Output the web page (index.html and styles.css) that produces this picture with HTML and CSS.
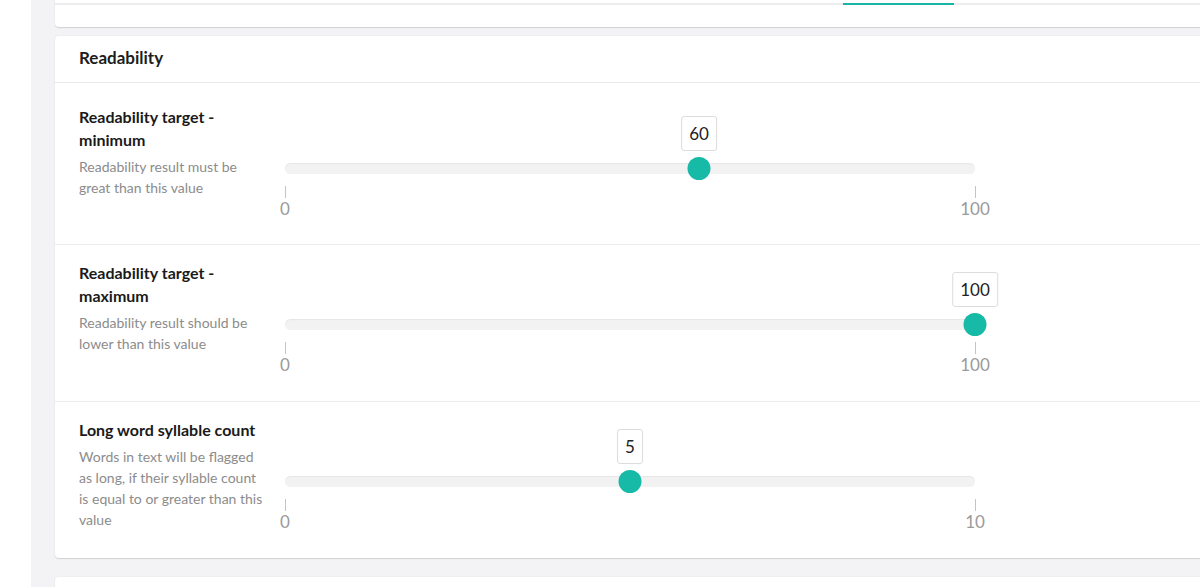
FILE: index.html
```html
<!DOCTYPE html>
<html>
<head>
<meta charset="utf-8">
<link rel="stylesheet" href="styles.css">
</head>
<body>
<div class="app">
  <div class="gutter"></div>
  <div class="main">
    <div class="card card-top">
      <div class="tabbar"><div class="tab-active"></div></div>
    </div>
    <div class="card card-settings">
      <div class="card-header">Readability</div>

      <div class="row row-first">
        <div class="label-col">
          <div class="title">Readability target - minimum</div>
          <div class="desc">Readability result must be great than this value</div>
        </div>
        <div class="slider">
          <div class="bubble" style="left:60%">60</div>
          <div class="track"></div>
          <div class="thumb" style="left:60%"></div>
          <div class="scale">
            <div class="mark"><span class="tick"></span><span class="num">0</span></div>
            <div class="mark"><span class="tick"></span><span class="num">100</span></div>
          </div>
        </div>
      </div>

      <div class="row">
        <div class="label-col">
          <div class="title">Readability target - maximum</div>
          <div class="desc">Readability result should be lower than this value</div>
        </div>
        <div class="slider">
          <div class="bubble" style="left:100%">100</div>
          <div class="track"></div>
          <div class="thumb" style="left:100%"></div>
          <div class="scale">
            <div class="mark"><span class="tick"></span><span class="num">0</span></div>
            <div class="mark"><span class="tick"></span><span class="num">100</span></div>
          </div>
        </div>
      </div>

      <div class="row row-last">
        <div class="label-col">
          <div class="title">Long word syllable count</div>
          <div class="desc">Words in text will be flagged as long, if their syllable count is equal to or greater than this value</div>
        </div>
        <div class="slider">
          <div class="bubble" style="left:50%">5</div>
          <div class="track"></div>
          <div class="thumb" style="left:50%"></div>
          <div class="scale">
            <div class="mark"><span class="tick"></span><span class="num">0</span></div>
            <div class="mark"><span class="tick"></span><span class="num">10</span></div>
          </div>
        </div>
      </div>
    </div>
    <div class="card card-next"></div>
  </div>
</div>
</body>
</html>
```

FILE: styles.css
```css
* { box-sizing: border-box; }
html, body {
  margin: 0;
  padding: 0;
  height: 100%;
  overflow: hidden;
  background: #ffffff;
}
body {
  font-family: Lato, "Open Sans", Arial, sans-serif;
  color: #1d1d1d;
}
.app {
  display: flex;
  height: 587px;
}
.gutter {
  width: 31px;
  flex: 0 0 31px;
  background: #ffffff;
}
.main {
  flex: 1;
  min-width: 0;
  background: #f3f3f5;
  padding-left: 24px;
  overflow: hidden;
  display: flex;
  flex-direction: column;
}
.card {
  width: 1200px;
  background: #ffffff;
  border-radius: 4px;
  box-shadow: 0 1px 1px rgba(0,0,0,0.12), 0 0 0 1px rgba(0,0,0,0.02);
  flex: none;
}
.card-top {
  height: 27px;
  border-radius: 0 0 4px 4px;
}
.tabbar {
  display: flex;
  height: 2px;
  margin-top: 3px;
  background: #ececef;
}
.tab-active {
  margin-left: 788px;
  width: 111px;
  height: 2px;
  background: #17b5a5;
}
.card-settings {
  margin-top: 9px;
}
.card-header {
  height: 47px;
  padding: 0 24px 4px;
  display: flex;
  align-items: center;
  font-size: 17px;
  font-weight: 700;
  border-bottom: 1px solid #e9e9ec;
}
.row {
  display: flex;
  align-items: flex-start;
  padding: 16px 24px 25px;
  border-bottom: 1px solid #ececee;
}
.row-first {
  padding-top: 22px;
  padding-bottom: 24px;
}
.row-last {
  border-bottom: none;
}
.label-col {
  width: 184px;
  flex: 0 0 184px;
  margin-right: 22px;
}
.title {
  font-size: 16px;
  font-weight: 700;
  line-height: 23px;
  color: #1a1a1a;
}
.desc {
  margin-top: 5px;
  font-size: 14px;
  line-height: 21px;
  color: #8c8c8c;
}
.slider {
  position: relative;
  width: 690px;
  flex: 0 0 690px;
  margin-top: 11px;
  padding-top: 47px;
}
.track {
  height: 11px;
  border-radius: 6px;
  background: #f2f2f3;
  box-shadow: inset 0 1px 1px rgba(0,0,0,0.05);
}
.thumb {
  position: absolute;
  top: 41px;
  width: 23px;
  height: 23px;
  border-radius: 50%;
  background: #17b9a7;
  transform: translateX(-50%);
}
.bubble {
  position: absolute;
  top: 0;
  height: 35px;
  padding: 0 7px;
  border: 1px solid #dcdcdc;
  border-radius: 3px;
  background: #ffffff;
  font-size: 17px;
  line-height: 33px;
  color: #222222;
  transform: translateX(-50%);
}
.scale {
  display: flex;
  justify-content: space-between;
  margin: 12px -20px 0;
}
.mark {
  width: 40px;
  display: flex;
  flex-direction: column;
  align-items: center;
}
.tick {
  display: block;
  width: 1px;
  height: 12px;
  background: #c4c4c4;
}
.num {
  font-size: 17px;
  line-height: 22px;
  color: #9a9a9a;
}
.card-next {
  margin-top: 19px;
  height: 40px;
}
```
